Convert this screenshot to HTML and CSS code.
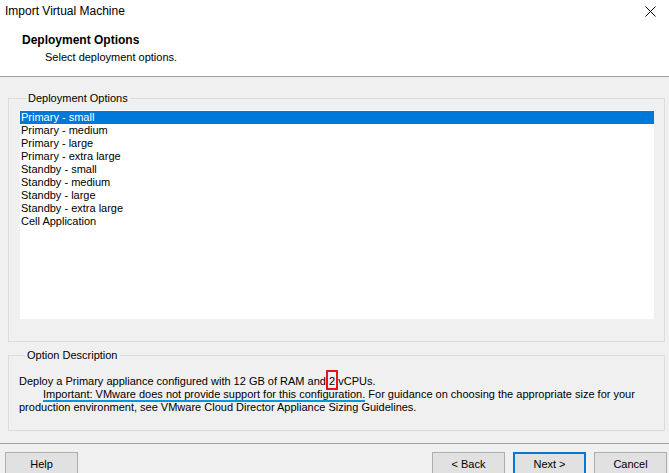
FILE: index.html
```html
<!DOCTYPE html>
<html>
<head>
<meta charset="utf-8">
<title>Import Virtual Machine</title>
<link rel="stylesheet" href="styles.css">
</head>
<body>
<div class="window">
  <div class="titlebar">
    <span class="title">Import Virtual Machine</span>
    <span class="close" aria-label="Close">
      <svg width="11" height="11" viewBox="0 0 11 11"><path d="M0.5 0.5 L10.5 10.5 M10.5 0.5 L0.5 10.5" stroke="#000" stroke-width="1" fill="none"/></svg>
    </span>
  </div>
  <div class="header">
    <div class="h-title">Deployment Options</div>
    <div class="h-sub">Select deployment options.</div>
  </div>
  <div class="main">
    <fieldset class="group group-options">
      <legend>Deployment Options</legend>
      <ul class="listbox">
        <li class="selected">Primary - small</li>
        <li>Primary - medium</li>
        <li>Primary - large</li>
        <li>Primary - extra large</li>
        <li>Standby - small</li>
        <li>Standby - medium</li>
        <li>Standby - large</li>
        <li>Standby - extra large</li>
        <li>Cell Application</li>
      </ul>
    </fieldset>
    <fieldset class="group group-desc">
      <legend>Option Description</legend>
      <div class="desc">
        <div class="line">Deploy a Primary appliance configured with 12 GB of RAM and <span class="mark">2</span> vCPUs.</div>
        <div class="line indent"><span class="uline">Important: VMware does not provide support for this configuration.</span> For guidance on choosing the appropriate size for your</div>
        <div class="line">production environment, see VMware Cloud Director Appliance Sizing Guidelines.</div>
      </div>
    </fieldset>
  </div>
  <div class="footer">
    <button class="btn">Help</button>
    <div class="spacer"></div>
    <button class="btn">&lt; Back</button>
    <button class="btn default">Next &gt;</button>
    <button class="btn">Cancel</button>
  </div>
</div>
</body>
</html>
```
FILE: styles.css
```css
html, body {
  margin: 0;
  padding: 0;
  background: #f0f0f0;
}
body {
  font-family: "Liberation Sans", Arial, sans-serif;
  font-size: 11px;
  color: #000;
  width: 669px;
  height: 473px;
  overflow: hidden;
}
.window {
  display: flex;
  flex-direction: column;
}
.titlebar {
  background: #fff;
  height: 22px;
  display: flex;
  align-items: center;
  justify-content: space-between;
  padding: 0 13px 0 5px;
}
.title {
  font-size: 12px;
}
.close {
  display: flex;
  align-items: center;
}
.header {
  background: #fff;
  height: 55px;
  box-sizing: border-box;
  padding: 12px 0 0 22px;
  border-bottom: 1px solid #a0a0a0;
}
.h-title {
  font-weight: bold;
  font-size: 12px;
  line-height: 13px;
}
.h-sub {
  font-size: 11px;
  line-height: 13px;
  margin-top: 4px;
  padding-left: 23px;
}
.main {
  padding: 0 4px 0 8px;
  display: flex;
  flex-direction: column;
}
.group {
  margin: 0;
  border: 1px solid #dcdcdc;
  min-width: 0;
}
.group legend {
  padding: 0 2px;
  margin-left: 6px;
  line-height: 13px;
  font-size: 11px;
}
.group-options {
  margin-top: 15px;
  padding: 5px 10px 22px 11px;
}
.listbox {
  list-style: none;
  margin: 0;
  padding: 1px 0 0 0;
  background: #fff;
  height: 209px;
  box-sizing: border-box;
}
.listbox li {
  height: 13px;
  line-height: 13px;
  padding-left: 1px;
  white-space: nowrap;
}
.listbox li.selected {
  background: #0078d7;
  color: #fff;
}
.group-desc {
  margin-top: 7px;
  padding: 13px 10px 16px 10px;
}
.desc .line {
  line-height: 13px;
  white-space: nowrap;
}
.desc .indent {
  padding-left: 24px;
}
.mark {
  position: relative;
}
.mark::after {
  content: "";
  position: absolute;
  left: -3px;
  right: -3px;
  top: -5px;
  bottom: -3px;
  border: 2px solid #e8141c;
}
.uline {
  position: relative;
}
.uline::after {
  content: "";
  position: absolute;
  left: 0;
  right: 0;
  bottom: -2px;
  height: 2px;
  background: #0a95df;
}
.footer {
  margin-top: 12px;
  border-top: 1px solid #a0a0a0;
  padding: 8px 2px 0 5px;
  display: flex;
  gap: 8px;
}
.spacer {
  flex: 1;
}
.btn {
  width: 73px;
  height: 23px;
  background: #e1e1e1;
  border: 1px solid #adadad;
  font-family: "Liberation Sans", Arial, sans-serif;
  font-size: 11px;
  color: #000;
  padding: 0;
  margin: 0;
}
.btn.default {
  border: 2px solid #0078d7;
}
```
